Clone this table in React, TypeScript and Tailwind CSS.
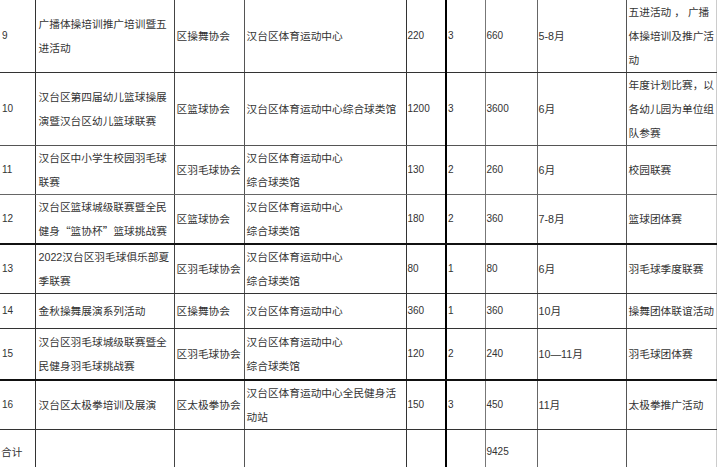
import React from "react";

type Row = {
  no: string;
  name: React.ReactNode[];
  org: string;
  place: string[];
  people: string;
  times: string;
  total: string;
  month: string;
  note: string[];
  h: string;
  bottom: string;
};

const Q = ({ c }: { c: string }) => (
  <span style={{ fontFamily: '"Noto Sans CJK SC", sans-serif' }}>{c}</span>
);

const rows: Row[] = [
  {
    no: "9",
    name: ["广播体操培训推广培训暨五", "进活动"],
    org: "区操舞协会",
    place: ["汉台区体育运动中心"],
    people: "220",
    times: "3",
    total: "660",
    month: "5-8月",
    note: ["五进活动 ， 广播", "体操培训及推广活", "动"],
    h: "h-[71px]",
    bottom: "border-b border-b-[#333]",
  },
  {
    no: "10",
    name: ["汉台区第四届幼儿篮球操展", "演暨汉台区幼儿篮球联赛"],
    org: "区篮球协会",
    place: ["汉台区体育运动中心综合球类馆"],
    people: "1200",
    times: "3",
    total: "3600",
    month: "6月",
    note: ["年度计划比赛，以", "各幼儿园为单位组", "队参赛"],
    h: "h-[72px]",
    bottom: "border-b border-b-[#555]",
  },
  {
    no: "11",
    name: ["汉台区中小学生校园羽毛球", "联赛"],
    org: "区羽毛球协会",
    place: ["汉台区体育运动中心", "综合球类馆"],
    people: "130",
    times: "2",
    total: "260",
    month: "6月",
    note: ["校园联赛"],
    h: "h-[48px]",
    bottom: "border-b border-b-[#666]",
  },
  {
    no: "12",
    name: [
      "汉台区篮球城级联赛暨全民",
      <>
        健身<Q c="“" />篮协杯<Q c="”" />篮球挑战赛
      </>,
    ],
    org: "区篮球协会",
    place: ["汉台区体育运动中心", "综合球类馆"],
    people: "180",
    times: "2",
    total: "360",
    month: "7-8月",
    note: ["篮球团体赛"],
    h: "h-[49px]",
    bottom: "border-b-2 border-b-[#111]",
  },
  {
    no: "13",
    name: ["2022汉台区羽毛球俱乐部夏", "季联赛"],
    org: "区羽毛球协会",
    place: ["汉台区体育运动中心", "综合球类馆"],
    people: "80",
    times: "1",
    total: "80",
    month: "6月",
    note: ["羽毛球季度联赛"],
    h: "h-[48px]",
    bottom: "border-b border-b-[#333]",
  },
  {
    no: "14",
    name: ["金秋操舞展演系列活动"],
    org: "区操舞协会",
    place: ["汉台区体育运动中心"],
    people: "360",
    times: "1",
    total: "360",
    month: "10月",
    note: ["操舞团体联谊活动"],
    h: "h-[35px]",
    bottom: "border-b border-b-[#333]",
  },
  {
    no: "15",
    name: ["汉台区羽毛球城级联赛暨全", "民健身羽毛球挑战赛"],
    org: "区羽毛球协会",
    place: ["汉台区体育运动中心", "综合球类馆"],
    people: "120",
    times: "2",
    total: "240",
    month: "10—11月",
    note: ["羽毛球团体赛"],
    h: "h-[51px]",
    bottom: "border-b-2 border-b-[#111]",
  },
  {
    no: "16",
    name: ["汉台区太极拳培训及展演"],
    org: "区太极拳协会",
    place: ["汉台区体育运动中心全民健身活", "动站"],
    people: "150",
    times: "3",
    total: "450",
    month: "11月",
    note: ["太极拳推广活动"],
    h: "h-[49px]",
    bottom: "border-b border-b-[#333]",
  },
];

function Lines({ items }: { items: React.ReactNode[] }) {
  return (
    <>
      {items.map((t, i) => (
        <div key={i}>{t}</div>
      ))}
    </>
  );
}

const cjk = "text-[10.7px] leading-[24px] whitespace-nowrap";
const num = "text-[10px] leading-[24px] whitespace-nowrap";

export default function App() {
  return (
    <div
      className="w-[720px] h-[467px] overflow-hidden bg-white text-[#333]"
      style={{ fontFamily: '"Liberation Sans", "Noto Sans CJK SC", sans-serif' }}
    >
      <table className="table-fixed border-collapse w-[716px]">
        <colgroup>
          <col className="w-[35px]" />
          <col className="w-[139px]" />
          <col className="w-[70px]" />
          <col className="w-[162px]" />
          <col className="w-[40px]" />
          <col className="w-[39px]" />
          <col className="w-[52px]" />
          <col className="w-[89px]" />
          <col className="w-[90px]" />
        </colgroup>
        <tbody>
          {rows.map((r) => (
            <tr key={r.no} className={r.h}>
              <td className={`${r.bottom} border-r border-r-[#333] pl-[2px] align-middle ${num}`}>{r.no}</td>
              <td className={`${r.bottom} border-r border-r-[#444] pl-[3px] align-middle ${cjk}`}>
                <Lines items={r.name} />
              </td>
              <td className={`${r.bottom} border-r border-r-[#555] pl-[2px] align-middle ${cjk}`}>{r.org}</td>
              <td className={`${r.bottom} border-r border-r-[#333] pl-[2px] align-middle ${cjk}`}>
                <Lines items={r.place} />
              </td>
              <td className={`${r.bottom} border-r-2 border-r-[#000] pl-[1px] align-middle ${num}`}>{r.people}</td>
              <td className={`${r.bottom} border-r border-r-[#777] pl-[1px] align-middle ${num}`}>{r.times}</td>
              <td className={`${r.bottom} border-r border-r-[#666] pl-[1px] align-middle ${num}`}>{r.total}</td>
              <td className={`${r.bottom} border-r border-r-[#555] pl-[1px] align-middle ${cjk}`}>{r.month}</td>
              <td className={`${r.bottom} border-r border-r-[#ccc] pl-[2px] align-middle ${cjk}`}>
                <Lines items={r.note} />
              </td>
            </tr>
          ))}
          <tr className="h-[46px]">
            <td className={`border-r border-r-[#333] pl-[1px] align-middle ${cjk}`}>合计</td>
            <td className="border-r border-r-[#444]"></td>
            <td className="border-r border-r-[#555]"></td>
            <td className="border-r border-r-[#333]"></td>
            <td className="border-r-2 border-r-[#000]"></td>
            <td className="border-r border-r-[#777]"></td>
            <td className={`border-r border-r-[#666] pl-[1px] align-middle ${num}`}>9425</td>
            <td className="border-r border-r-[#555]"></td>
            <td className="border-r border-r-[#ccc]"></td>
          </tr>
        </tbody>
      </table>
    </div>
  );
}
